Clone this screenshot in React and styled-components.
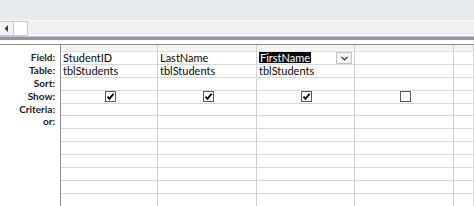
import React from 'react';
import styled, { createGlobalStyle } from 'styled-components';

const ROW = '12.9px';

const GlobalStyle = createGlobalStyle`
  html, body {
    margin: 0;
    padding: 0;
    background: #ffffff;
    font-family: Lato, "Liberation Sans", sans-serif;
  }
`;

const Page = styled.div`
  width: 474px;
  height: 206px;
  overflow: hidden;
  display: flex;
  flex-direction: column;
  background: #ffffff;
  & > * {
    flex-shrink: 0;
  }
`;

const TablePane = styled.div`
  height: 20px;
  background: #e9ecef;
`;

const ScrollRow = styled.div`
  height: 14px;
  border-top: 1px solid #fbfbfc;
  background: #f1f1f2;
  display: flex;
`;

const ScrollButton = styled.div`
  width: 13px;
  height: 13px;
  border: 1px solid #c9c9cc;
  border-left: none;
  background: ${p => (p.$thumb ? '#ffffff' : '#f4f4f4')};
  display: flex;
  align-items: center;
  justify-content: center;
`;

const Splitter = styled.div`
  margin-top: 1px;
  height: 3px;
  background: #9393b1;
  border-top: 1px solid #c3c3d4;
`;

const DesignArea = styled.div`
  flex: 1 1 auto;
  min-height: 0;
  overflow: hidden;
  margin-top: 4px;
  display: flex;
  border-top: 1px solid #8f8f86;
`;

const LabelPane = styled.div`
  width: 60px;
  flex-shrink: 0;
  padding-top: 6px;
  display: flex;
  flex-direction: column;
`;

const Label = styled.div`
  height: ${ROW};
  flex-shrink: 0;
  line-height: ${ROW};
  padding-right: 5px;
  text-align: right;
  font-size: 10px;
  font-weight: 700;
  color: #1c1c1c;
`;

const Grid = styled.div`
  flex: 1;
  border-left: 1px solid #8e8e8e;
  display: flex;
  flex-direction: column;
`;

const Row = styled.div`
  display: grid;
  flex-shrink: 0;
  grid-template-columns: 97px 99px 98px 99px 1fr;
  height: ${p => (p.$selector ? '7px' : ROW)};
  box-sizing: border-box;
  border-bottom: 1px solid ${p => (p.$selector ? '#e2e2e2' : '#d6d6df')};
  background: ${p => (p.$selector ? '#f4f4f4' : '#ffffff')};
`;

const Cell = styled.div`
  box-sizing: border-box;
  border-right: 1px solid #d0d0d9;
  padding-left: 2px;
  padding-bottom: ${p => (p.$center ? '0' : '1px')};
  display: flex;
  align-items: center;
  justify-content: ${p => (p.$center ? 'center' : 'flex-start')};
  font-size: 11px;
  color: #0a0a0a;
  white-space: nowrap;
  overflow: hidden;
  position: relative;
`;

const Selected = styled.span`
  background: #0a0a0a;
  color: #ffffff;
  padding: 0 1px;
  line-height: 11px;
`;

const DropButton = styled.div`
  position: absolute;
  right: 2px;
  top: 0;
  width: 14px;
  height: 10px;
  border: 1px solid #c4c4c8;
  background: #f6f6f7;
  display: flex;
  align-items: center;
  justify-content: center;
`;

const Check = ({ on }) => (
  <svg width="11" height="11" viewBox="0 0 11 11">
    <rect x="0.5" y="0.5" width="10" height="10" fill="#fff" stroke="#5a5a5a" />
    {on && <path d="M2.5 5.6 L4.5 7.8 L8.6 2.8" fill="none" stroke="#000" strokeWidth="1.8" />}
  </svg>
);

const labels = ['Field:', 'Table:', 'Sort:', 'Show:', 'Criteria:', 'or:', '', '', '', '', '', '', ''];

const columns = [
  { field: 'StudentID', table: 'tblStudents', show: true },
  { field: 'LastName', table: 'tblStudents', show: true },
  { field: 'FirstName', table: 'tblStudents', show: true, selected: true },
  { field: '', table: '', show: false, box: true },
  { field: '', table: '', show: false },
];

export default function App() {
  return (
    <Page>
      <GlobalStyle />
      <TablePane />
      <ScrollRow>
        <ScrollButton>
          <svg width="5" height="7" viewBox="0 0 5 7">
            <path d="M4 0 L0.5 3.5 L4 7 Z" fill="#3c3c3c" />
          </svg>
        </ScrollButton>
        <ScrollButton $thumb />
      </ScrollRow>
      <Splitter />
      <DesignArea>
        <LabelPane>
          {labels.map((l, i) => (
            <Label key={i}>{l}</Label>
          ))}
        </LabelPane>
        <Grid>
          <Row $selector>
            {columns.map((c, i) => (
              <Cell key={i} />
            ))}
          </Row>
          {labels.map((l, r) => (
            <Row key={r}>
              {columns.map((c, i) => {
                if (r === 0) {
                  return (
                    <Cell key={i}>
                      {c.selected ? <Selected>{c.field}</Selected> : c.field}
                      {c.selected && (
                        <DropButton>
                          <svg width="7" height="5" viewBox="0 0 7 5">
                            <path d="M0.5 0.8 L3.5 3.8 L6.5 0.8" fill="none" stroke="#333" strokeWidth="1.2" />
                          </svg>
                        </DropButton>
                      )}
                    </Cell>
                  );
                }
                if (r === 1) return <Cell key={i}>{c.table}</Cell>;
                if (r === 3 && (c.show || c.box)) {
                  return (
                    <Cell key={i} $center>
                      <Check on={c.show} />
                    </Cell>
                  );
                }
                return <Cell key={i} />;
              })}
            </Row>
          ))}
        </Grid>
      </DesignArea>
    </Page>
  );
}
